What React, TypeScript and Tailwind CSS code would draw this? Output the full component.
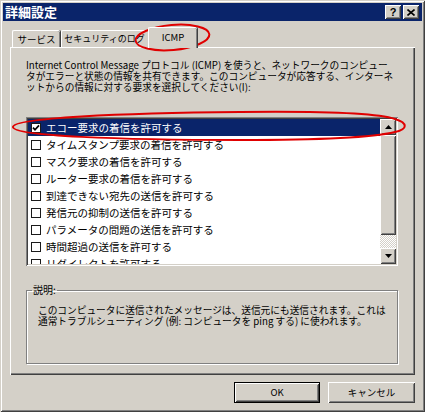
const raised =
  "shadow-[inset_1px_1px_0_#fff,inset_-1px_-1px_0_#404040,inset_2px_2px_0_#d4d0c8,inset_-2px_-2px_0_#808080]";

const tabEdge = "rounded-t-[2px] border-l border-t border-white [box-shadow:inset_-1px_0_0_#808080,1px_0_0_#404040]";

const items = [
  "エコー要求の着信を許可する",
  "タイムスタンプ要求の着信を許可する",
  "マスク要求の着信を許可する",
  "ルーター要求の着信を許可する",
  "到達できない宛先の送信を許可する",
  "発信元の抑制の送信を許可する",
  "パラメータの問題の送信を許可する",
  "時間超過の送信を許可する",
  "リダイレクトを許可する",
];

function Arrow({ down }: { down?: boolean }) {
  return (
    <svg width="7" height="4" viewBox="0 0 7 4">
      <polygon points={down ? "0,0 7,0 3.5,4" : "3.5,0 7,4 0,4"} fill="#000" />
    </svg>
  );
}

function Row({ label, selected }: { label: string; selected?: boolean }) {
  return (
    <div
      className={
        "flex h-[17px] shrink-0 items-center whitespace-nowrap pl-[3px] text-[10.5px] leading-[17px] " +
        (selected ? "bg-[#0a246a] text-white" : "text-black")
      }
    >
      <span className="flex h-[10px] w-[10px] shrink-0 items-center justify-center border border-[#1a1a1a] bg-white">
        {selected && (
          <svg width="8" height="8" viewBox="0 0 8 8">
            <path d="M1 3.6 L3 5.8 L7 1.4" stroke="#000" strokeWidth="1.7" fill="none" />
          </svg>
        )}
      </span>
      <span className="ml-[5px]">{label}</span>
    </div>
  );
}

export default function App() {
  return (
    <div className="relative h-[412px] w-[425px] overflow-hidden bg-[#d4d0c8] p-[3px] font-['Noto_Sans_CJK_JP','Liberation_Sans',sans-serif] text-black shadow-[inset_1px_1px_0_#d4d0c8,inset_-1px_-1px_0_#404040,inset_2px_2px_0_#fff,inset_-2px_-2px_0_#808080]">
      {/* title bar */}
      <div className="flex h-[18px] items-center justify-between bg-[#0a246a] pl-[2px] pr-[3px]">
        <span className="text-[13px] font-bold leading-[18px] text-white">詳細設定</span>
        <div className="flex items-center gap-[2px]">
          <div className={"flex h-[14px] w-[16px] items-center justify-center bg-[#d4d0c8] " + raised}>
            <span className="font-['Liberation_Sans',sans-serif] text-[11px] font-bold leading-none">?</span>
          </div>
          <div className={"flex h-[14px] w-[16px] items-center justify-center bg-[#d4d0c8] " + raised}>
            <svg width="8" height="7" viewBox="0 0 8 7">
              <path d="M0.5 0.5 L7.5 6.5 M7.5 0.5 L0.5 6.5" stroke="#000" strokeWidth="1.6" />
            </svg>
          </div>
        </div>
      </div>

      <div className="px-[7px]">
        {/* tabs */}
        <div className="mt-[6px] flex h-[20px] items-end pl-[2px] text-[9.5px]">
          <div className={"flex h-[17px] w-[48px] items-center justify-center " + tabEdge}>サービス</div>
          <div className={"ml-[1px] flex h-[17px] w-[89px] items-center justify-center pr-[3px] text-[9px] " + tabEdge}>
            セキュリティのログ
          </div>
          <div className={"relative z-10 -mb-px -ml-[2px] flex h-[21px] w-[49px] items-center justify-center bg-[#d4d0c8] pb-[2px] " + tabEdge}>
            ICMP
          </div>
        </div>

        {/* panel */}
        <div className="flex h-[328px] flex-col pl-[16px] pr-[17px] pt-[13px] shadow-[inset_1px_1px_0_#fff,inset_-1px_-1px_0_#404040,inset_-2px_-2px_0_#808080]">
          <p className="whitespace-nowrap text-[9.7px] leading-[11px]">
            Internet Control Message プロトコル (ICMP) を使うと、ネットワークのコンピュー
            <br />
            タがエラーと状態の情報を共有できます。このコンピュータが応答する、インターネ
            <br />
            ットからの情報に対する要求を選択してください(I):
          </p>

          {/* list */}
          <div className="mt-[24px] flex h-[149px] bg-white p-[2px] shadow-[inset_1px_1px_0_#808080,inset_-1px_-1px_0_#fff,inset_2px_2px_0_#404040,inset_-2px_-2px_0_#d4d0c8]">
            <div className="flex min-w-0 flex-1 flex-col overflow-hidden">
              {items.map((it, i) => (
                <Row key={it} label={it} selected={i === 0} />
              ))}
            </div>
            <div className="flex w-[16px] flex-col">
              <div className={"flex h-[16px] items-center justify-center bg-[#d4d0c8] " + raised}>
                <Arrow />
              </div>
              <div className={"h-[100px] bg-[#d4d0c8] " + raised} />
              <div className="flex-1 bg-[repeating-conic-gradient(#fff_0%_25%,#d4d0c8_0%_50%)] bg-[length:2px_2px]" />
              <div className={"flex h-[16px] items-center justify-center bg-[#d4d0c8] " + raised}>
                <Arrow down />
              </div>
            </div>
          </div>

          {/* description */}
          <fieldset className="mt-[18px] h-[80px] border border-[#808080] shadow-[1px_1px_0_#fff,inset_1px_1px_0_#fff]">
            <legend className="ml-[5px] px-[1px] text-[10px] leading-[12px]">説明:</legend>
            <p className="whitespace-nowrap pl-[11px] pt-[9px] text-[9.7px] leading-[11px]">
              このコンピュータに送信されたメッセージは、送信元にも送信されます。これは
              <br />
              通常トラブルシューティング (例: コンピュータを ping する) に使われます。
            </p>
          </fieldset>
        </div>

        {/* buttons */}
        <div className="mt-[7px] flex justify-end gap-[8px] text-[9.5px]">
          <div className="h-[21px] w-[86px] border border-black">
            <div className={"flex h-full items-center justify-center bg-[#d4d0c8] " + raised}>OK</div>
          </div>
          <div className={"flex h-[21px] w-[87px] items-center justify-center bg-[#d4d0c8] " + raised}>
            キャンセル
          </div>
        </div>
      </div>

      {/* red annotation marks */}
      <svg className="pointer-events-none absolute left-0 top-0" width="425" height="412">
        <ellipse cx="172.5" cy="37.5" rx="37" ry="12.5" transform="rotate(-5 172.5 37.5)" fill="none" stroke="#e00000" strokeWidth="2" />
        <path
          d="M13 127 C13 118 120 113 240 112 C330 111 380 114 395 119 C408 123 408 129 395 132 C375 137 330 140 240 140 C120 140 13 136 13 127 Z"
          fill="none"
          stroke="#e00000"
          strokeWidth="2"
        />
      </svg>
    </div>
  );
}
